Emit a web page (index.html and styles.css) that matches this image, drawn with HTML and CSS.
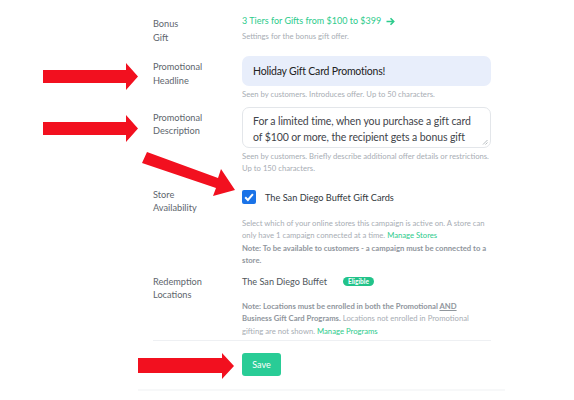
FILE: index.html
```html
<!DOCTYPE html>
<html>
<head>
<meta charset="utf-8">
<link rel="stylesheet" href="styles.css">
</head>
<body>
<div class="page">
  <div class="form">
    <div class="row row-bonus">
      <div class="label">Bonus<br>Gift</div>
      <div class="field">
        <div class="link">3 Tiers for Gifts from $100 to $399<svg class="arrow-r" width="9" height="9" viewBox="0 0 9 9"><path d="M0.5 4.5 H7.5 M4.5 1.3 L7.7 4.5 L4.5 7.7" fill="none" stroke="#2dcb8c" stroke-width="1.6"/></svg></div>
        <div class="help">Settings for the bonus gift offer.</div>
      </div>
    </div>
    <div class="row row-headline">
      <div class="label">Promotional<br>Headline</div>
      <div class="field">
        <div class="input">Holiday Gift Card Promotions!</div>
        <div class="help">Seen by customers. Introduces offer. Up to 50 characters.</div>
      </div>
    </div>
    <div class="row row-desc">
      <div class="label">Promotional<br>Description</div>
      <div class="field">
        <div class="textarea">
          <div class="ta-text">For a limited time, when you purchase a gift card of $100 or more, the recipient gets a bonus gift card.</div>
          <svg class="grip" width="6" height="6" viewBox="0 0 6 6"><path d="M5.5 1 L1 5.5 M5.5 3.5 L3.5 5.5" stroke="#9aa0a6" stroke-width="0.7"/></svg>
        </div>
        <div class="help">Seen by customers. Briefly describe additional offer details or restrictions. Up to 150 characters.</div>
      </div>
    </div>
    <div class="row row-store">
      <div class="label">Store<br>Availability</div>
      <div class="field">
        <div class="check-line">
          <span class="checkbox"><svg width="14" height="14" viewBox="0 0 14 14"><path d="M3.2 7.3 L5.9 10 L10.9 4.2" fill="none" stroke="#fff" stroke-width="2"/></svg></span>
          <span class="check-label">The San Diego Buffet Gift Cards</span>
        </div>
        <div class="help">Select which of your online stores this campaign is active on. A store can only have 1 campaign connected at a time. <span class="green">Manage Stores</span></div>
        <div class="help note">Note: To be available to customers - a campaign must be connected to a store.</div>
      </div>
    </div>
    <div class="row row-redeem">
      <div class="label">Redemption<br>Locations</div>
      <div class="field">
        <div class="loc-line"><span class="loc">The San Diego Buffet</span><span class="badge">Eligible</span></div>
        <div class="help redeem-help"><b>Note: Locations must be enrolled in both the Promotional <u>AND</u> Business Gift Card Programs.</b> Locations not enrolled in Promotional gifting are not shown. <span class="green">Manage Programs</span></div>
      </div>
    </div>
    <div class="divider"></div>
    <div class="actions">
      <button class="save">Save</button>
    </div>
  </div>
  <div class="bottom-line"></div>
  <svg class="arrows" width="574" height="400" viewBox="0 0 574 400">
    <polygon fill="#f2101f" points="43,70 126,70 126,63 138,76.5 126,90 126,83 43,83"/>
    <polygon fill="#f2101f" points="43,122 126,122 126,115 138,128.5 126,142 126,135 43,135"/>
    <polygon fill="#f2101f" points="147,152 218,178 221,169 235,190 213,196 216,188 142,163"/>
    <polygon fill="#f2101f" points="138,358 222,358 222,353 234,366 222,379 222,373 138,373"/>
  </svg>
</div>
</body>
</html>
```

FILE: styles.css
```css
* { box-sizing: border-box; }
html, body { margin: 0; padding: 0; background: #fff; }
body { font-family: "Lato", "Noto Sans", sans-serif; }
.page { position: relative; width: 574px; height: 400px; overflow: hidden; }
.form { padding: 17px 0 0 153px; width: 491px; box-sizing: content-box; }
.row { display: grid; grid-template-columns: 89px 249px; }
.label { font-size: 9.2px; line-height: 13.5px; color: #60666d; }
.row-bonus .label { padding-top: 0; }
.link { font-size: 9px; line-height: 12px; color: #2dcb8c; display: flex; align-items: center; margin-top: -2px; }
.arrow-r { margin-left: 5px; }
.help { font-size: 7.7px; line-height: 12.5px; color: #a8adb4; }
.row-bonus .help { margin-top: 3px; }
.row-bonus { margin-bottom: 12px; }
.row-headline .label { padding-top: 4px; }
.input { height: 30px; background: #e8eefb; border-radius: 7px; font-size: 10.5px; letter-spacing: -0.2px; color: #222; padding: 0 11px; display: flex; align-items: center; margin-bottom: 2px; }
.row-headline { margin-bottom: 6px; }
.row-desc .label { padding-top: 4px; }
.textarea { position: relative; height: 41px; border: 1px solid #e3e6ea; border-radius: 7px; overflow: hidden; padding: 5px 12px 0 10px; margin-bottom: 2px; }
.ta-text { font-size: 10.5px; letter-spacing: -0.1px; line-height: 16px; color: #3f444a; }
.grip { position: absolute; right: 2px; bottom: 2px; }
.row-desc { margin-bottom: 13px; }
.check-line { display: flex; align-items: center; height: 15px; margin-top: 2px; margin-bottom: 12px; }
.checkbox { width: 14px; height: 14px; border-radius: 2px; background: #1a73e8; display: inline-flex; margin-right: 9px; }
.check-label { font-size: 9.2px; color: #33383d; }
.note { font-weight: 700; color: #90969d; }
.green { color: #2dcb8c; }
.row-store { margin-bottom: 8px; }
.loc-line { display: flex; align-items: center; height: 14px; margin-bottom: 11px; }
.loc { font-size: 9.1px; color: #50555b; }
.badge { margin-left: 16px; background: #22c38a; color: #fff; font-size: 6.5px; font-weight: 700; border-radius: 5px; padding: 0 5px; line-height: 9px; height: 9px; }
.redeem-help { max-width: 236px; }
.help b { color: #90969d; }
.help u { text-decoration: underline; }
.divider { width: 338px; height: 1px; background: #eef0f3; margin-top: 3px; }
.actions { padding: 11px 0 0 89px; }
.save { width: 39px; height: 23px; border: 0; border-radius: 3px; background: #29cc96; color: #fff; font-family: "Lato", sans-serif; font-size: 9px; padding: 0; }
.bottom-line { position: absolute; left: 138px; top: 389px; width: 367px; height: 2px; background: #f7f8f9; }
.arrows { position: absolute; left: 0; top: 0; pointer-events: none; }
```
